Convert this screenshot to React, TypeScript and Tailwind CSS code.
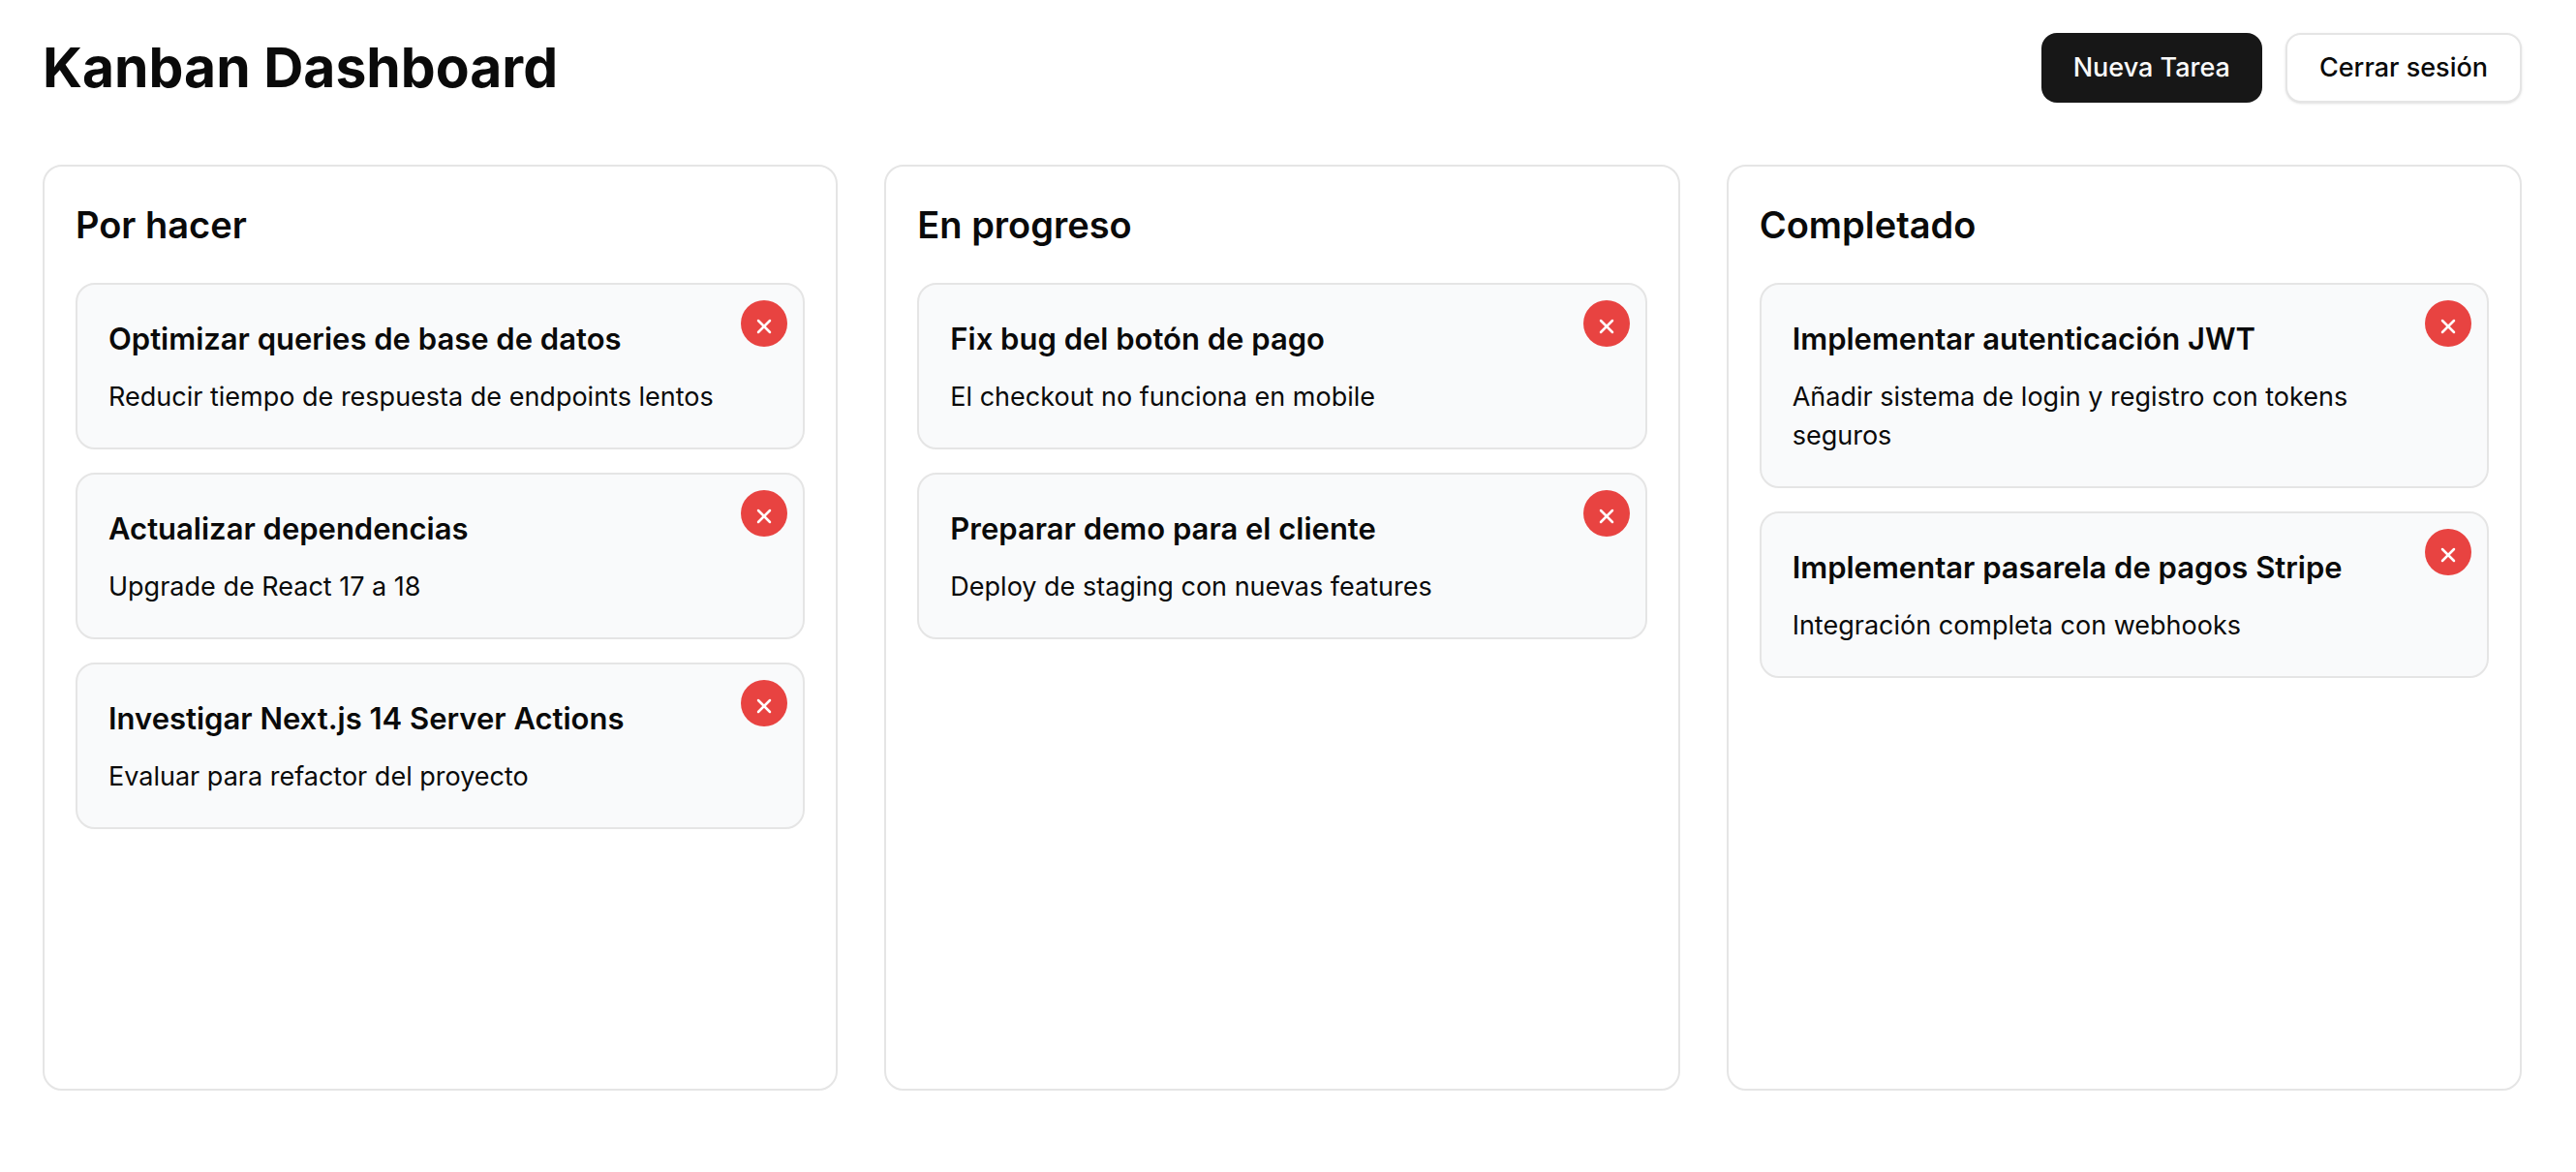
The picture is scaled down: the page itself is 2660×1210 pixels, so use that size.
import { X } from "lucide-react";

type Task = { title: string; description: string };

const columns: { name: string; tasks: Task[] }[] = [
  {
    name: "Por hacer",
    tasks: [
      { title: "Optimizar queries de base de datos", description: "Reducir tiempo de respuesta de endpoints lentos" },
      { title: "Actualizar dependencias", description: "Upgrade de React 17 a 18" },
      { title: "Investigar Next.js 14 Server Actions", description: "Evaluar para refactor del proyecto" },
    ],
  },
  {
    name: "En progreso",
    tasks: [
      { title: "Fix bug del botón de pago", description: "El checkout no funciona en mobile" },
      { title: "Preparar demo para el cliente", description: "Deploy de staging con nuevas features" },
    ],
  },
  {
    name: "Completado",
    tasks: [
      { title: "Implementar autenticación JWT", description: "Añadir sistema de login y registro con tokens seguros" },
      { title: "Implementar pasarela de pagos Stripe", description: "Integración completa con webhooks" },
    ],
  },
];

function TaskCard({ task }: { task: Task }) {
  return (
    <article className="relative rounded-[20px] border-2 border-[#e5e5e5] bg-[#f9fafb] p-8">
      <h3 className="pr-8 text-[31px] leading-[48px] font-semibold">{task.title}</h3>
      <p className="mt-4 pr-8 text-[27px] leading-10">{task.description}</p>
      <button
        type="button"
        aria-label={`Eliminar ${task.title}`}
        className="absolute top-4 right-4 flex size-12 items-center justify-center rounded-full bg-[#e84341] text-white"
      >
        <X className="mt-1.5 size-6" strokeWidth={2.5} />
      </button>
    </article>
  );
}

export default function App() {
  return (
    <main className="bg-white pt-[34px] pr-14 pb-20 pl-11 font-['Inter',sans-serif] text-[#0a0a0a]">
      <header className="mb-16 flex items-center justify-between">
        <h1 className="text-[57px] leading-[72px] font-bold">Kanban Dashboard</h1>
        <div className="flex gap-6">
          <button type="button" className="h-[72px] rounded-2xl bg-[#171717] px-[33px] text-[27px] font-medium text-[#fafafa]">
            Nueva Tarea
          </button>
          <button type="button" className="h-[72px] rounded-2xl border-2 border-[#e5e5e5] bg-white px-[33px] text-[27px] font-medium shadow-sm">
            Cerrar sesión
          </button>
        </div>
      </header>
      <div className="grid grid-cols-3 gap-12">
        {columns.map((column) => (
          <section key={column.name} className="min-h-[956px] rounded-[20px] border-2 border-[#e5e5e5] p-8">
            <h2 className="mb-8 text-[38px] leading-[56px] font-semibold">{column.name}</h2>
            <div className="flex flex-col gap-6">
              {column.tasks.map((task) => (
                <TaskCard key={task.title} task={task} />
              ))}
            </div>
          </section>
        ))}
      </div>
    </main>
  );
}
